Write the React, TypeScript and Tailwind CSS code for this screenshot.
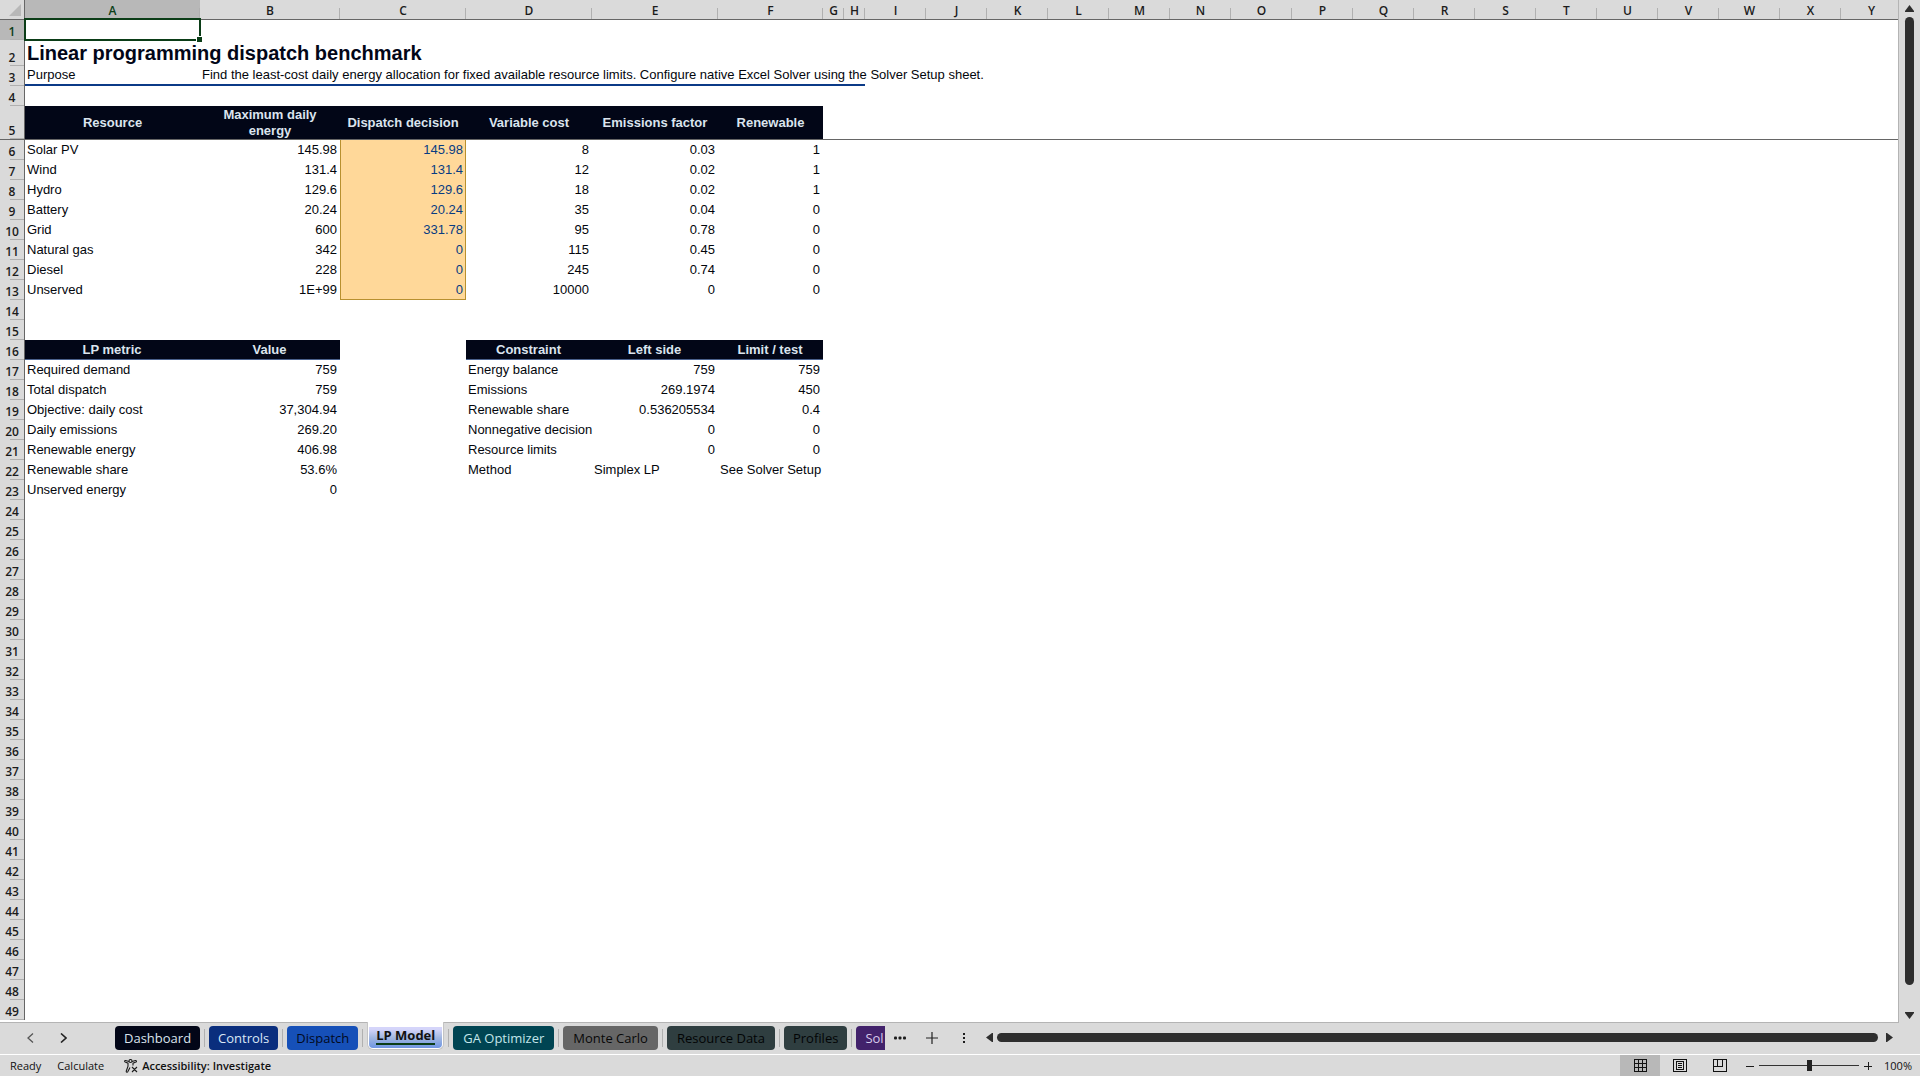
import { useState } from 'react';
import { clsx } from 'clsx';

type CellKind = 'head' | 'input' | 'title';

interface Cell {
  value: string;
  kind?: CellKind;
  align?: 'left' | 'right';
}

const columns = 'ABCDEFGHIJKLMNOPQRSTUVWXY'.split('');
const rowNumbers = Array.from({ length: 49 }, (_, i) => i + 1);

const resources = [
  ['Solar PV', '145.98', '145.98', '8', '0.03', '1'],
  ['Wind', '131.4', '131.4', '12', '0.02', '1'],
  ['Hydro', '129.6', '129.6', '18', '0.02', '1'],
  ['Battery', '20.24', '20.24', '35', '0.04', '0'],
  ['Grid', '600', '331.78', '95', '0.78', '0'],
  ['Natural gas', '342', '0', '115', '0.45', '0'],
  ['Diesel', '228', '0', '245', '0.74', '0'],
  ['Unserved', '1E+99', '0', '10000', '0', '0'],
];

const metrics = [
  ['Required demand', '759'],
  ['Total dispatch', '759'],
  ['Objective: daily cost', '37,304.94'],
  ['Daily emissions', '269.20'],
  ['Renewable energy', '406.98'],
  ['Renewable share', '53.6%'],
  ['Unserved energy', '0'],
];

const constraints = [
  ['Energy balance', '759', '759'],
  ['Emissions', '269.1974', '450'],
  ['Renewable share', '0.536205534', '0.4'],
  ['Nonnegative decision', '0', '0'],
  ['Resource limits', '0', '0'],
  ['Method', 'Simplex LP', 'See Solver Setup'],
];

function buildCells() {
  const cells: Record<string, Cell> = {
    A2: { value: 'Linear programming dispatch benchmark', kind: 'title' },
    A3: { value: 'Purpose' },
    B3: {
      value:
        'Find the least-cost daily energy allocation for fixed available resource limits. Configure native Excel Solver using the Solver Setup sheet.',
    },
  };
  const put = (firstCol: number, row: number, values: string[], kind?: CellKind) =>
    values.forEach((value, i) => {
      const numeric = /^[\d.,]+(%|E\+\d+)?$/.test(value);
      cells[columns[firstCol + i] + row] = { value, kind, align: numeric ? 'right' : 'left' };
    });

  put(0, 5, ['Resource', 'Maximum daily energy', 'Dispatch decision', 'Variable cost', 'Emissions factor', 'Renewable'], 'head');
  resources.forEach((r, i) => {
    put(0, 6 + i, r);
    cells[`C${6 + i}`].kind = 'input';
  });
  put(0, 16, ['LP metric', 'Value'], 'head');
  put(3, 16, ['Constraint', 'Left side', 'Limit / test'], 'head');
  metrics.forEach((m, i) => put(0, 17 + i, m));
  constraints.forEach((c, i) => put(3, 17 + i, c));
  return cells;
}

const cells = buildCells();

const tabs = [
  { name: 'Dashboard', style: 'bg-[#020617] px-[9px] text-[#dbe4ee]' },
  { name: 'Controls', style: 'bg-[#0a2e7d] px-[9px] text-[#dbe8f5]' },
  { name: 'Dispatch', style: 'bg-[#1650b8] px-[9px] text-[#020a1c]' },
  { name: 'LP Model', style: 'bg-[#8fb0e8] px-[9px] text-[#111111]' },
  { name: 'GA Optimizer', style: 'bg-[#004452] px-[10px] text-[#c3e6ea]' },
  { name: 'Monte Carlo', style: 'bg-[#666666] px-[10px] text-[#080808]' },
  { name: 'Resource Data', style: 'bg-[#2f3e40] px-[10px] text-[#020405]' },
  { name: 'Profiles', style: 'bg-[#2f3e40] px-[9px] text-[#020405]' },
];

function colWidth(col: string) {
  if (col === 'A') return 'w-[175px]';
  if (col === 'B') return 'w-[140px]';
  if ('CDE'.includes(col)) return 'w-[126px]';
  if (col === 'F') return 'w-[105px]';
  if ('GH'.includes(col)) return 'w-[21px]';
  return 'w-[61px]';
}

function rowHeight(row: number) {
  if (row === 2) return 'h-[26px]';
  if (row === 5) return 'h-[34px]';
  return 'h-5';
}

function SheetCell({ col, row }: { col: string; row: number }) {
  const cell = cells[col + row];
  const selected = col === 'A' && row === 1;
  const wraps = cell?.kind === 'head' && row === 5;
  return (
    <td
      className={clsx(
        'py-0',
        wraps ? 'px-1' : 'pl-[2px] whitespace-nowrap',
        !wraps && (cell?.kind === 'input' ? 'pr-[2px]' : 'pr-[3px]'),
        cell?.kind === 'title' ? 'text-[20px] leading-6 font-bold text-[#020617]' : 'text-[13px] leading-4',
        selected && 'relative',
        row === 3 && 'ABCDEFGH'.includes(col) && 'border-b-2 border-[#0b3a87]',
        row === 5 && 'border-b border-[#666666]',
        cell?.kind === 'head' && 'bg-[#020617] text-center font-bold text-[#dbe4ee]',
        cell?.kind === 'head' && row === 16 && 'border-b border-[#4a608c]',
        cell?.kind === 'input' && 'border-x border-[#b8902f] bg-[#ffd899] text-[#083c82]',
        cell?.kind === 'input' && row === 13 && 'border-b',
        cell?.kind !== 'head' && (cell?.align === 'right' ? 'text-right' : 'text-left'),
      )}
    >
      {wraps ? <div className="mx-auto max-w-[116px]">{cell?.value}</div> : cell?.value}
      {selected && (
        <span className="absolute -top-0.5 -right-px -bottom-px -left-px border-2 border-[#0b3d17]">
          <span className="absolute -right-[3px] -bottom-[3px] size-[6px] border-t border-l border-white bg-[#0b3d17]" />
        </span>
      )}
    </td>
  );
}

function Sheet() {
  return (
    <div className="min-w-0 flex-1 overflow-hidden border-r border-b border-[#b4b4b4] bg-white">
      <table className="w-[1878px] table-fixed border-separate border-spacing-0 font-['Liberation_Sans',Arial,sans-serif] text-[#03060c]">
        <thead>
          <tr className="h-5 bg-[#dadada] font-['Open_Sans',sans-serif] text-[12px] leading-4 text-[#1c1c1c]">
            <th className="w-[25px] border-r border-b border-[#666666] p-0">
              <svg className="mr-[3px] ml-auto block size-3" viewBox="0 0 12 12" aria-hidden="true">
                <path d="M12 0v12H0z" fill="#b8b8b8" />
              </svg>
            </th>
            {columns.map(col => (
              <th
                key={col}
                scope="col"
                className={clsx(
                  'border-b border-[#666666] bg-[linear-gradient(#b0b0b0,#b0b0b0)] bg-[length:1px_11px] bg-right-bottom bg-no-repeat p-0 pt-0.5 font-semibold',
                  colWidth(col),
                  col === 'A' && 'bg-[#b8b8b8] text-[#0b3d17]',
                )}
              >
                {col}
              </th>
            ))}
          </tr>
        </thead>
        <tbody>
          {rowNumbers.map(row => (
            <tr key={row} className={rowHeight(row)}>
              <th
                scope="row"
                className={clsx(
                  "border-r border-[#666666] bg-[linear-gradient(#b0b0b0,#b0b0b0)] bg-[length:14px_1px] bg-right-bottom bg-no-repeat p-0 align-bottom font-['Open_Sans',sans-serif] text-[12px] leading-4 font-semibold",
                  row === 1 ? 'bg-[#b8b8b8] text-[#0b3d17]' : 'bg-[#dadada] text-[#1c1c1c]',
                  row === 5 && 'border-b',
                )}
              >
                {row}
              </th>
              {columns.map(col => (
                <SheetCell key={col} col={col} row={row} />
              ))}
            </tr>
          ))}
        </tbody>
      </table>
    </div>
  );
}

function VerticalScroll() {
  return (
    <div className="flex w-[21px] shrink-0 flex-col items-center pt-[5px] pb-1">
      <button type="button" aria-label="Scroll up">
        <svg className="block h-[7px] w-[9px]" viewBox="0 0 9 7">
          <path d="M4.5 0 9 6v1H0V6z" fill="#2e2e2e" />
        </svg>
      </button>
      <div className="mt-[5px] mb-[27px] w-[9px] flex-1 rounded-full bg-[#2e2e2e]" />
      <button type="button" aria-label="Scroll down">
        <svg className="block h-[7px] w-[9px]" viewBox="0 0 9 7">
          <path d="M0 0h9v1L4.5 7 0 1z" fill="#2e2e2e" />
        </svg>
      </button>
    </div>
  );
}

function TabBar() {
  const [active, setActive] = useState('LP Model');
  return (
    <div className="flex h-8 items-center border-b border-white pb-0.5 font-['Open_Sans',sans-serif] text-[13px] leading-5">
      <div className="flex w-[115px] shrink-0 items-center gap-[26px] pl-[27px]">
        <button type="button" aria-label="Previous sheet">
          <svg className="block h-[10px] w-[7px]" viewBox="0 0 7 10" fill="none" stroke="#555555" strokeWidth="1.3">
            <path d="M6 .5 1 5l5 4.5" />
          </svg>
        </button>
        <button type="button" aria-label="Next sheet">
          <svg className="block h-[10px] w-[7px]" viewBox="0 0 7 10" fill="none" stroke="#222222" strokeWidth="1.6">
            <path d="m1 .5 5 4.5-5 4.5" />
          </svg>
        </button>
      </div>
      {/* pulled up by a pixel so the active tab opens into the sheet */}
      <nav className="-mt-px flex w-[770px] shrink-0 items-start self-start overflow-hidden" aria-label="Sheets">
        {tabs.map(tab => (
          <div key={tab.name} className="flex shrink-0 items-start">
            {tab.name === active ? (
              <button
                type="button"
                className="h-7 w-[77px] rounded-b-md border-x border-b border-[#c4c4c4] bg-white px-px pt-[5px] pb-px"
              >
                <span className="flex h-full items-start justify-center rounded-b-sm bg-linear-to-b from-[#d5d5fa] from-10% via-[#a3b8e0] via-50% to-[#6f95e2] font-bold text-[#111111]">
                  <span className="border-b-2 border-[#0b3d17] leading-4">{tab.name}</span>
                </span>
              </button>
            ) : (
              <button
                type="button"
                onClick={() => setActive(tab.name)}
                className={clsx('mt-1 h-6 rounded-sm', tab.style)}
              >
                {tab.name}
              </button>
            )}
            <span className="mx-1 mt-[7px] h-[18px] w-px bg-[#b0b0b0]" />
          </div>
        ))}
        <button
          type="button"
          aria-label="Solver Setup"
          className="mt-1 h-6 min-w-0 flex-1 rounded-l-sm bg-[#42226b] pl-[9px] text-left text-[#d8cbea]"
        >
          Sol
        </button>
      </nav>
      <button type="button" aria-label="More sheets" className="ml-[9px]">
        <svg className="block h-1 w-3" viewBox="0 0 12 4" fill="#1c1c1c">
          <rect y=".5" width="3" height="3" rx="1" />
          <rect x="4.5" y=".5" width="3" height="3" rx="1" />
          <rect x="9" y=".5" width="3" height="3" rx="1" />
        </svg>
      </button>
      <button type="button" aria-label="New sheet" className="ml-5">
        <svg className="block size-3" viewBox="0 0 12 12" stroke="#222222" strokeWidth="1.2">
          <path d="M6 0v12M0 6h12" />
        </svg>
      </button>
      <button type="button" aria-label="Resize" className="ml-6">
        <svg className="block h-3 w-1" viewBox="0 0 4 12" fill="#1c1c1c">
          <path d="M1 1h2v2H1zM1 5h2v2H1zM1 9h2v2H1z" />
        </svg>
      </button>
      <button type="button" aria-label="Scroll left" className="ml-5">
        <svg className="block h-[9px] w-[7px]" viewBox="0 0 7 9">
          <path d="M7 0v9H6L0 4.5 6 0z" fill="#2e2e2e" />
        </svg>
      </button>
      <div className="mx-1 h-[9px] flex-1 rounded-full bg-[#2e2e2e]" />
      <button type="button" aria-label="Scroll right" className="mr-[27px] ml-1">
        <svg className="block h-[9px] w-[7px]" viewBox="0 0 7 9">
          <path d="M0 0v9h1l6-4.5L1 0z" fill="#2e2e2e" />
        </svg>
      </button>
    </div>
  );
}

function StatusBar() {
  const [zoom, setZoom] = useState(100);
  return (
    <footer className="flex h-[21px] items-center font-['Open_Sans',sans-serif] text-[11px] leading-4 text-[#111111]">
      <span className="ml-[10px]">Ready</span>
      <span className="ml-4">Calculate</span>
      <button type="button" className="ml-5 flex items-center gap-1 font-semibold">
        <svg className="block size-[14px]" viewBox="0 0 14 14" fill="none" stroke="#1c1c1c" strokeWidth="1.1">
          <circle cx="6.5" cy="2" r="1.5" />
          <path d="M5 2.5l-3.5-1C.5 1.3.3 2.7 1.2 3.1L4 4.2v3L2.3 12c-.3 1.2 1 1.7 1.6.6L6 8.5M8 2.5l3.5-1c1-.2 1.3 1.2.4 1.6L9 4.2v2.3M8 8l5 5M13 8l-5 5" />
        </svg>
        Accessibility: Investigate
      </button>

      <div className="ml-auto flex h-full">
        <button type="button" aria-label="Normal view" className="flex h-full w-10 items-center justify-center bg-[#b8b8b8]">
          <svg className="block size-[13px]" viewBox="0 0 13 13" fill="none" stroke="#111111" shapeRendering="crispEdges">
            <path d="M.5.5h12v12H.5zM4.5 0v13M8.5 0v13M0 4.5h13M0 8.5h13" />
          </svg>
        </button>
        <button type="button" aria-label="Page layout" className="flex h-full w-10 items-center justify-center">
          <svg className="block h-[13px] w-[14px]" viewBox="0 0 14 13" fill="none" stroke="#111111" shapeRendering="crispEdges">
            <path d="M.5.5h13v12H.5zM3.5 2.5h7v8h-7zM5 4.5h4M5 6.5h4M5 8.5h4" />
          </svg>
        </button>
        <button type="button" aria-label="Page break preview" className="flex h-full w-10 items-center justify-center">
          <svg className="block h-[13px] w-[14px]" viewBox="0 0 14 13" fill="none" stroke="#111111" shapeRendering="crispEdges">
            <path d="M.5.5h13v12H.5zM4.5 0v8M9.5 0v8M0 7.5h10" />
          </svg>
        </button>
      </div>
      <button type="button" aria-label="Zoom out" className="ml-[6px]">
        <svg className="block size-2" viewBox="0 0 8 8" stroke="#1c1c1c" shapeRendering="crispEdges">
          <path d="M0 4.5h8" />
        </svg>
      </button>
      <input
        type="range"
        aria-label="Zoom"
        min={0}
        max={200}
        value={zoom}
        onChange={e => setZoom(Number(e.target.value))}
        className="mx-[5px] h-3 w-[100px] appearance-none bg-[linear-gradient(#333333,#333333)] bg-[length:100%_1px] bg-center bg-no-repeat [&::-webkit-slider-thumb]:h-[11px] [&::-webkit-slider-thumb]:w-[5px] [&::-webkit-slider-thumb]:appearance-none [&::-webkit-slider-thumb]:bg-[#222222]"
      />
      <button type="button" aria-label="Zoom in">
        <svg className="block size-2" viewBox="0 0 8 8" stroke="#1c1c1c" shapeRendering="crispEdges">
          <path d="M0 4.5h8M4.5 0v8" />
        </svg>
      </button>
      <span className="mr-2 ml-3">{zoom}%</span>
    </footer>
  );
}

export default function App() {
  return (
    <div className="flex h-screen flex-col overflow-hidden bg-[#dadada]">
      <main className="flex min-h-0 flex-1">
        <Sheet />
        <VerticalScroll />
      </main>
      <TabBar />
      <StatusBar />
    </div>
  );
}
